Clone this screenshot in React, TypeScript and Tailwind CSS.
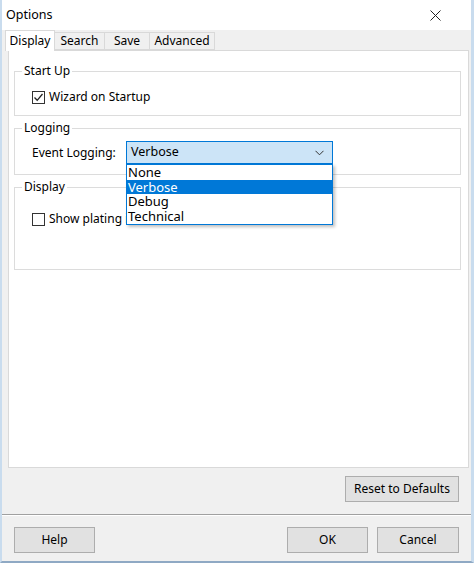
const font = { fontFamily: '"Noto Sans", "Open Sans", Arial, sans-serif' };

function Check({ checked }: { checked: boolean }) {
  return (
    <span className="w-[13px] h-[13px] border border-[#333333] bg-white flex items-center justify-center shrink-0">
      {checked && (
        <svg width="11" height="11" viewBox="0 0 11 11" fill="none">
          <path d="M1.5 5.5L4.2 8.3L9.5 2" stroke="#222" strokeWidth="1.3" />
        </svg>
      )}
    </span>
  );
}

function Group({
  title,
  height,
  children,
}: {
  title: string;
  height: string;
  children?: React.ReactNode;
}) {
  return (
    <fieldset className={`border border-[#dcdcdc] ${height} px-[17px]`}>
      <legend className="ml-[-10px] px-[2px] leading-[16px] text-[12px] text-black">
        {title}
      </legend>
      {children}
    </fieldset>
  );
}

function Btn({ label, w }: { label: string; w: string }) {
  return (
    <button
      className={`${w} h-[26px] bg-[#e1e1e1] border border-[#adadad] text-[12px] text-black`}
    >
      {label}
    </button>
  );
}

export default function App() {
  return (
    <div
      style={font}
      className="relative w-[474px] h-[563px] bg-[#f0f0f0] border-l-[2px] border-r-[3px] border-b-[2px] border-[#c9dcee] border-b-[#8fa9c4] flex flex-col text-[12px] text-black overflow-hidden"
    >
      {/* Title bar */}
      <div className="h-[30px] bg-white flex items-center justify-between pl-[4px] pr-[30px] shrink-0">
        <span className="text-[12.5px]">Options</span>
        <svg width="11" height="11" viewBox="0 0 11 11">
          <path d="M0.5 0.5L10.5 10.5M10.5 0.5L0.5 10.5" stroke="#222" strokeWidth="1" />
        </svg>
      </div>

      {/* Tabs */}
      <div className="flex items-end h-[20px] pl-[3px] shrink-0">
        <div className="h-[21px] w-[50px] bg-white border border-b-0 border-[#d9d9d9] flex items-center justify-center relative z-10 mb-[-1px]">
          Display
        </div>
        <div className="h-[18px] w-[50px] border border-l-0 border-[#d9d9d9] flex items-center justify-center">
          Search
        </div>
        <div className="h-[18px] w-[45px] border border-l-0 border-[#d9d9d9] flex items-center justify-center">
          Save
        </div>
        <div className="h-[18px] w-[65px] border border-l-0 border-[#d9d9d9] flex items-center justify-center">
          Advanced
        </div>
      </div>

      {/* Tab page */}
      <div className="mx-[6px] mr-[2px] h-[418px] bg-white border border-[#d9d9d9] pt-[12px] pl-[5px] pr-[7px] flex flex-col gap-[4px] shrink-0">
        <Group title="Start Up" height="h-[53px]">
          <div className="flex items-center gap-[4px] mt-[11px] h-[14px]">
            <Check checked />
            <span>Wizard on Startup</span>
          </div>
        </Group>
        <Group title="Logging" height="h-[55px]">
          <div className="flex items-center mt-[5px]">
            <span className="w-[94px]">Event Logging:</span>
            <div className="w-[207px] h-[23px] bg-[#cce4f7] border border-[#0078d7] flex items-center justify-between pl-[4px] pr-[8px]">
              <span className="text-[12.5px]">Verbose</span>
              <svg width="9" height="6" viewBox="0 0 9 6" fill="none">
                <path d="M0.5 0.8L4.5 4.8L8.5 0.8" stroke="#333" strokeWidth="1" />
              </svg>
            </div>
          </div>
        </Group>
        <Group title="Display" height="h-[91px]">
          <div className="flex items-center gap-[4px] mt-[17px] h-[14px]">
            <Check checked={false} />
            <span className="whitespace-nowrap">Show plating in</span>
          </div>
        </Group>
      </div>

      {/* Reset row */}
      <div className="flex justify-end pr-[12px] pt-[8px] h-[46px] shrink-0">
        <Btn label="Reset to Defaults" w="w-[114px]" />
      </div>
      <div className="h-[2px] border-t border-[#a0a0a0] bg-white shrink-0" />

      {/* Bottom buttons */}
      <div className="flex items-center pl-[12px] pr-[12px] pt-[11px]">
        <Btn label="Help" w="w-[81px]" />
        <div className="flex-1" />
        <div className="flex gap-[9px]">
          <Btn label="OK" w="w-[81px]" />
          <Btn label="Cancel" w="w-[82px]" />
        </div>
      </div>

      {/* Open dropdown list, lies over the Display group */}
      <div className="absolute left-[124px] top-[164px] w-[207px] h-[61px] bg-white border border-[#0078d7] shadow-[2px_2px_3px_rgba(0,0,0,0.25)] z-20 text-[13px] leading-[14.5px]">
        <div className="pl-[1px]">None</div>
        <div className="pl-[1px] bg-[#0078d7] text-white">Verbose</div>
        <div className="pl-[1px]">Debug</div>
        <div className="pl-[1px]">Technical</div>
      </div>
    </div>
  );
}
